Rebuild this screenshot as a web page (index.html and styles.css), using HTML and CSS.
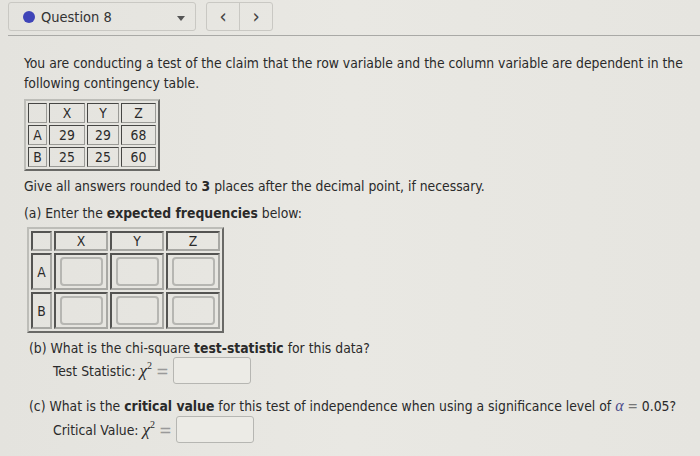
FILE: index.html
```html
<!DOCTYPE html>
<html>
<head>
<meta charset="utf-8">
<link rel="stylesheet" href="styles.css">
</head>
<body>
<div class="page">
  <header class="topbar">
    <div class="qselect">
      <span class="dot"></span>
      <span class="qlabel">Question 8</span>
      <span class="caret"></span>
    </div>
    <div class="nav">
      <span class="navbtn">&#8249;</span>
      <span class="navbtn">&#8250;</span>
    </div>
  </header>
  <main class="content">
    <p class="intro">You are conducting a test of the claim that the row variable and the column variable are dependent in the following contingency table.</p>
    <table class="data">
      <tr><td></td><td>X</td><td>Y</td><td>Z</td></tr>
      <tr><td>A</td><td>29</td><td>29</td><td>68</td></tr>
      <tr><td>B</td><td>25</td><td>25</td><td>60</td></tr>
    </table>
    <p class="note">Give all answers rounded to <b>3</b> places after the decimal point, if necessary.</p>
    <p class="part">(a) Enter the <b>expected frequencies</b> below:</p>
    <table class="answers">
      <tr class="head"><td></td><td>X</td><td>Y</td><td>Z</td></tr>
      <tr><td>A</td><td><span class="box"></span></td><td><span class="box"></span></td><td><span class="box"></span></td></tr>
      <tr><td>B</td><td><span class="box"></span></td><td><span class="box"></span></td><td><span class="box"></span></td></tr>
    </table>
    <p class="part pb">(b) What is the chi-square <b>test-statistic</b> for this data?</p>
    <div class="answer-line">Test Statistic: <span class="chi">χ<sup>2</sup></span> <span class="eq">=</span> <span class="field"></span></div>
    <p class="part pc">(c) What is the <b>critical value</b> for this test of independence when using a significance level of <span class="alpha">α</span> <span class="eqs">=</span> 0.05?</p>
    <div class="answer-line">Critical Value: <span class="chi">χ<sup>2</sup></span> <span class="eq">=</span> <span class="field"></span></div>
  </main>
</div>
</body>
</html>
```

FILE: styles.css
```css
html, body {
  margin: 0;
  padding: 0;
}
body {
  width: 700px;
  height: 456px;
  overflow: hidden;
  background: linear-gradient(90deg, #e4e3de 0%, #e9e8e3 50%, #e6e5e0 100%);
  font-family: "DejaVu Sans Condensed", "DejaVu Sans", sans-serif;
  font-stretch: condensed;
  color: #2a2a2a;
  font-size: 13.8px;
}
.page {
  padding: 2px 0 0 8px;
}
.topbar {
  display: flex;
  align-items: flex-start;
  gap: 10px;
  height: 33px;
  border-bottom: 1px solid #a9a9a6;
}
.qselect {
  width: 188px;
  height: 29px;
  border: 1px solid #c9c8c3;
  border-radius: 3px;
  display: flex;
  align-items: center;
  box-sizing: border-box;
  padding-left: 14px;
  position: relative;
}
.dot {
  width: 12px;
  height: 12px;
  border-radius: 50%;
  background: #3f44b8;
  margin-right: 6px;
}
.qlabel {
  font-size: 14.5px;
  color: #333;
}
.caret {
  position: absolute;
  right: 10px;
  top: 13px;
  width: 0;
  height: 0;
  border-left: 4px solid transparent;
  border-right: 4px solid transparent;
  border-top: 5px solid #555;
}
.nav {
  display: flex;
  border: 1px solid #c9c8c3;
  border-radius: 3px;
  height: 29px;
  box-sizing: border-box;
}
.navbtn {
  width: 32px;
  display: flex;
  align-items: center;
  justify-content: center;
  font-size: 20px;
  color: #444;
  line-height: 1;
  padding-bottom: 2px;
}
.navbtn + .navbtn {
  border-left: 1px solid #c9c8c3;
}
.content {
  padding: 17px 10px 0 16px;
}
p {
  margin: 0;
}
.intro {
  line-height: 20px;
  width: 670px;
}
table {
  border-collapse: separate;
  border: 2px outset #bdbdb8;
}
.data {
  margin-top: 6px;
  border-spacing: 2px;
}
.data td {
  border: 1px solid #9a9a96;
  border-style: inset;
  height: 18px;
  padding: 0;
  text-align: center;
  font-size: 13.8px;
  line-height: 18px;
}
.data td:first-child { width: 17px; }
.data td:nth-child(2) { width: 34px; }
.data td:nth-child(3) { width: 30px; }
.data td:nth-child(4) { width: 33px; }
.note {
  margin-top: 7px;
}
.part {
  margin-top: 11px;
}
.answers {
  margin-top: 6px;
  margin-left: 3px;
  border-spacing: 2px;
}
.answers td {
  border: 2px inset #a8a8a4;
  padding: 0;
  text-align: center;
  font-size: 13.8px;
}
.answers .head td { height: 16px; line-height: 16px; }
.answers td:first-child { width: 17px; }
.answers td:not(:first-child) { width: 50px; }
.answers tr:not(.head) td { height: 33px; }
.box {
  display: block;
  width: 43px;
  height: 29px;
  margin: 0 auto;
  border: 2px solid #b6b6b2;
  border-radius: 4px;
  box-sizing: border-box;
}
.pb {
  margin-top: 7px;
  margin-left: 5px;
}
.pc {
  margin-top: 13px;
  margin-left: 5px;
}
.answer-line {
  margin-left: 29px;
  display: flex;
  align-items: center;
  gap: 4px;
  margin-top: 1px;
}
.chi {
  font-family: "Liberation Serif", serif;
  font-style: italic;
  font-size: 17px;
}
.chi sup {
  font-size: 10px;
  font-style: normal;
}
.eq {
  color: #999;
  font-size: 17px;
}
.alpha {
  font-family: "Liberation Serif", serif;
  font-style: italic;
  font-size: 16px;
  color: #4a4a8a;
}
.eqs { color: #777; }
.field {
  width: 78px;
  height: 27px;
  border: 1px solid #b6b6b2;
  border-radius: 3px;
  box-sizing: border-box;
  background: #ecebe6;
}
```
